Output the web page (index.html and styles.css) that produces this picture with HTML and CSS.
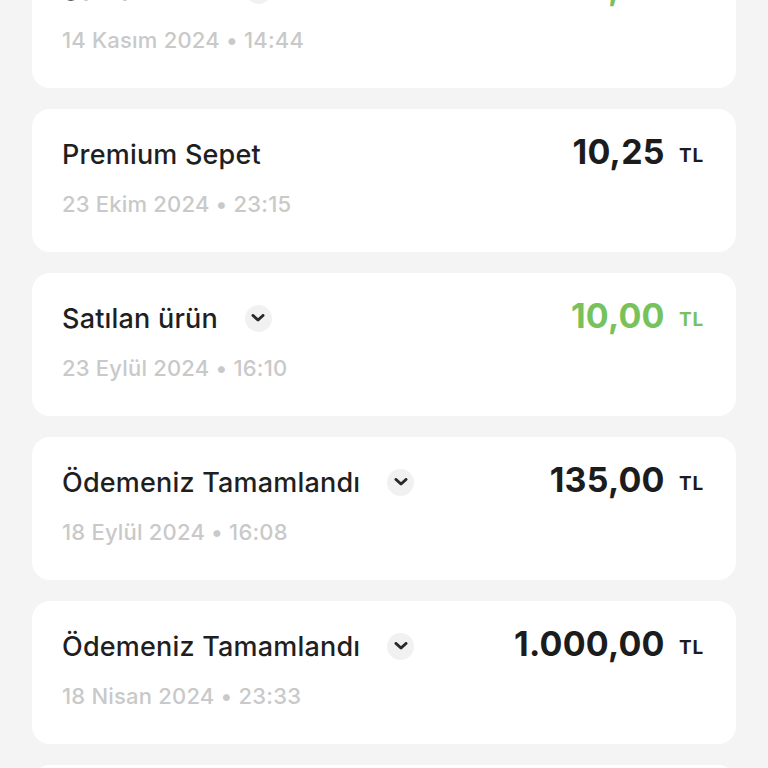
FILE: index.html
```html
<!DOCTYPE html>
<html>
<head>
    <title>Hesap hareketleri</title>
    <link rel="stylesheet" href="styles.css">
</head>
<body>
<div class="list">

    <div class="card">
        <div class="row">
            <div class="title">Satılan ürün <span class="toggle"><svg viewBox="0 0 14 8" width="14" height="8"><path d="M2 1.5 L7 6 L12 1.5" /></svg></span></div>
            <div class="amount income">100,00 <span class="cur">TL</span></div>
        </div>
        <div class="date">14 Kasım 2024 • 14:44</div>
    </div>

    <div class="card">
        <div class="row">
            <div class="title">Premium Sepet</div>
            <div class="amount">10,25 <span class="cur">TL</span></div>
        </div>
        <div class="date">23 Ekim 2024 • 23:15</div>
    </div>

    <div class="card">
        <div class="row">
            <div class="title">Satılan ürün <span class="toggle"><svg viewBox="0 0 14 8" width="14" height="8"><path d="M2 1.5 L7 6 L12 1.5" /></svg></span></div>
            <div class="amount income">10,00 <span class="cur">TL</span></div>
        </div>
        <div class="date">23 Eylül 2024 • 16:10</div>
    </div>

    <div class="card">
        <div class="row">
            <div class="title">Ödemeniz Tamamlandı <span class="toggle"><svg viewBox="0 0 14 8" width="14" height="8"><path d="M2 1.5 L7 6 L12 1.5" /></svg></span></div>
            <div class="amount">135,00 <span class="cur">TL</span></div>
        </div>
        <div class="date">18 Eylül 2024 • 16:08</div>
    </div>

    <div class="card">
        <div class="row">
            <div class="title">Ödemeniz Tamamlandı <span class="toggle"><svg viewBox="0 0 14 8" width="14" height="8"><path d="M2 1.5 L7 6 L12 1.5" /></svg></span></div>
            <div class="amount">1.000,00 <span class="cur">TL</span></div>
        </div>
        <div class="date">18 Nisan 2024 • 23:33</div>
    </div>

    <div class="card">
        <div class="row">
            <div class="title">Ödemeniz Tamamlandı</div>
            <div class="amount">50,00 <span class="cur">TL</span></div>
        </div>
        <div class="date">12 Nisan 2024 • 10:21</div>
    </div>

</div>
</body>
</html>
```

FILE: styles.css
```css
body {
    background-color: #f4f4f4;
    color: #1f1f1f;
    font-family: Inter, "Noto Sans", sans-serif;
    margin: 0;
    overflow: hidden;
}

.list {
    display: flex;
    flex-direction: column;
    gap: 21px;
    margin-top: -55px;
    padding: 0 32px;
}

.card {
    background-color: #ffffff;
    border-radius: 18px;
    height: 143px;
    box-sizing: border-box;
    padding: 28px 32px 0 30px;
}

.row {
    display: flex;
    justify-content: space-between;
    align-items: center;
    height: 34px;
}

.title {
    display: flex;
    align-items: center;
    font-size: 27px;
    font-weight: 500;
    letter-spacing: 0.2px;
}

.toggle {
    display: flex;
    align-items: center;
    justify-content: center;
    width: 27px;
    height: 27px;
    margin-left: 27px;
    border-radius: 50%;
    background-color: #f1f1f1;
}

.toggle path {
    fill: none;
    stroke: #2a2a2a;
    stroke-width: 3;
    stroke-linecap: round;
    stroke-linejoin: round;
}

.amount {
    font-size: 34px;
    font-weight: 700;
    letter-spacing: 0.2px;
    color: #1c1c1c;
    margin-bottom: 6px;
}

.amount.income {
    color: #78c25b;
}

.cur {
    font-size: 19px;
    letter-spacing: 0.8px;
    margin-left: 6px;
    position: relative;
    top: -2px;
}

.date {
    margin-top: 20px;
    font-size: 22px;
    line-height: 26px;
    font-weight: 500;
    letter-spacing: 0.2px;
    color: #c9c9c9;
}
```
